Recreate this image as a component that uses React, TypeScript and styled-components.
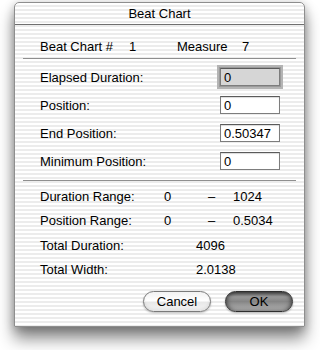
import React from "react";
import styled, { createGlobalStyle } from "styled-components";

const GlobalStyle = createGlobalStyle`
  html, body {
    margin: 0;
    padding: 0;
    background: #ffffff;
  }
  body {
    font-family: "Liberation Sans", Arial, sans-serif;
    font-size: 13px;
    color: #000;
  }
`;

const Stage = styled.div`
  width: 320px;
  height: 350px;
  overflow: hidden;
  padding: 2px 0 0 14px;
  box-sizing: border-box;
`;

const Window = styled.div`
  width: 291px;
  height: 325px;
  box-sizing: border-box;
  display: flex;
  flex-direction: column;
  border: 1px solid #8e8e8e;
  border-radius: 5px 5px 0 0;
  background: repeating-linear-gradient(
    to bottom,
    #ffffff 0px,
    #ffffff 2px,
    #ececec 2px,
    #ececec 4px
  );
  box-shadow: 0 12px 16px rgba(0, 0, 0, 0.45), 0 2px 10px rgba(0, 0, 0, 0.25);
`;

const TitleBar = styled.div`
  height: 21px;
  flex: none;
  display: flex;
  align-items: center;
  justify-content: center;
  border-bottom: 1px solid #6f6f6f;
  font-size: 13px;
`;

const Body = styled.div`
  flex: 1;
  display: flex;
  flex-direction: column;
  padding: 0 8px;
`;

const HeaderRow = styled.div`
  display: grid;
  grid-template-columns: 89px 48px 65px auto;
  padding: 11px 0 0 17px;
  height: 20px;
  align-items: center;
`;

const Separator = styled.div<{ $top: number }>`
  height: 1px;
  background: #8f8f8f;
  margin-top: ${(p) => p.$top}px;
`;

const FieldList = styled.div`
  display: flex;
  flex-direction: column;
  gap: 10px;
  padding: 9px 16px 0 17px;
`;

const FieldRow = styled.div`
  display: grid;
  grid-template-columns: 1fr 60px;
  align-items: center;
  height: 18px;
`;

const Field = styled.div<{ $focused?: boolean }>`
  height: 18px;
  box-sizing: border-box;
  border: 1px solid #7d7d7d;
  border-top-color: #5a5a5a;
  background: ${(p) => (p.$focused ? "#d6d6d6" : "#ffffff")};
  padding: 0 3px;
  display: flex;
  align-items: center;
  box-shadow: ${(p) =>
    p.$focused
      ? "0 0 0 1px #9a9a9a, 0 0 0 3px #b4b4b4"
      : "inset 0 1px 1px rgba(0,0,0,0.15)"};
`;

const InfoList = styled.div`
  display: flex;
  flex-direction: column;
  padding: 3px 0 0 17px;
`;

const InfoRow = styled.div`
  display: grid;
  grid-template-columns: 124px 44px 25px auto;
  height: 24.5px;
  align-items: center;
`;

const Single = styled.span`
  grid-column: 2 / span 3;
  padding-left: 32px;
`;

const ButtonBar = styled.div`
  margin-top: auto;
  display: flex;
  justify-content: flex-end;
  gap: 14px;
  padding: 0 3px 14px 0;
`;

const AquaButton = styled.button<{ $default?: boolean }>`
  width: 68px;
  height: 21px;
  border-radius: 11px;
  font-family: "Liberation Sans", Arial, sans-serif;
  font-size: 13px;
  color: #000;
  padding: 0;
  border: 1px solid ${(p) => (p.$default ? "#2e2e2e" : "#7a7a7a")};
  background: ${(p) =>
    p.$default
      ? "linear-gradient(to bottom, #5e5e5e 0%, #999999 25%, #858585 50%, #a4a4a4 80%, #cccccc 100%)"
      : "linear-gradient(to bottom, #f2f2f2 0%, #ffffff 45%, #e8e8e8 55%, #f6f6f6 100%)"};
  box-shadow: ${(p) =>
    p.$default
      ? "inset 0 0 5px rgba(0,0,0,0.7), 0 1px 2px rgba(0,0,0,0.3)"
      : "inset 0 -2px 3px rgba(0,0,0,0.08), 0 1px 2px rgba(0,0,0,0.25)"};
`;

const fields = [
  { label: "Elapsed Duration:", value: "0", focused: true },
  { label: "Position:", value: "0" },
  { label: "End Position:", value: "0.50347" },
  { label: "Minimum Position:", value: "0" },
];

export default function App() {
  return (
    <>
      <GlobalStyle />
      <Stage>
        <Window>
          <TitleBar>Beat Chart</TitleBar>
          <Body>
            <HeaderRow>
              <span>Beat Chart #</span>
              <span>1</span>
              <span>Measure</span>
              <span>7</span>
            </HeaderRow>
            <Separator $top={2} />
            <FieldList>
              {fields.map((f) => (
                <FieldRow key={f.label}>
                  <span>{f.label}</span>
                  <Field $focused={f.focused}>{f.value}</Field>
                </FieldRow>
              ))}
            </FieldList>
            <Separator $top={10} />
            <InfoList>
              <InfoRow>
                <span>Duration Range:</span>
                <span>0</span>
                <span>–</span>
                <span>1024</span>
              </InfoRow>
              <InfoRow>
                <span>Position Range:</span>
                <span>0</span>
                <span>–</span>
                <span>0.5034</span>
              </InfoRow>
              <InfoRow>
                <span>Total Duration:</span>
                <Single>4096</Single>
              </InfoRow>
              <InfoRow>
                <span>Total Width:</span>
                <Single>2.0138</Single>
              </InfoRow>
            </InfoList>
            <ButtonBar>
              <AquaButton>Cancel</AquaButton>
              <AquaButton $default>OK</AquaButton>
            </ButtonBar>
          </Body>
        </Window>
      </Stage>
    </>
  );
}
